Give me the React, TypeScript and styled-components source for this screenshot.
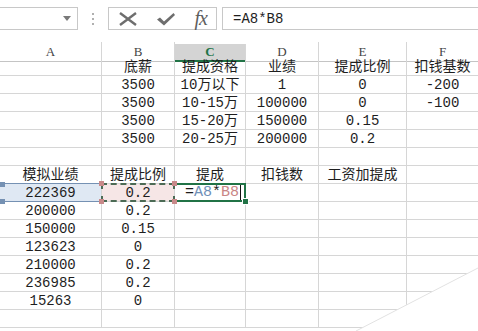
import React from 'react';
import styled, {createGlobalStyle, css} from 'styled-components';

const GREEN = '#217346';
const GRID = '#d6d6d6';
const COLS = '102px 73px 71px 73px 88px 72px';

const GlobalStyle = createGlobalStyle`
	body {
		margin: 0;
		background: #fff;
		overflow: hidden;
		font-family: "Liberation Mono", "Noto Sans CJK SC", monospace;
	}
`;

const top: string[][] = [
	['', '底薪', '提成资格', '业绩', '提成比例', '扣钱基数'],
	['', '3500', '10万以下', '1', '0', '-200'],
	['', '3500', '10-15万', '100000', '0', '-100'],
	['', '3500', '15-20万', '150000', '0.15', ''],
	['', '3500', '20-25万', '200000', '0.2', ''],
	['', '', '', '', '', ''],
	['模拟业绩', '提成比例', '提成', '扣钱数', '工资加提成', ''],
];

const bottom: string[][] = [
	['200000', '0.2'],
	['150000', '0.15'],
	['123623', '0'],
	['210000', '0.2'],
	['236985', '0.2'],
	['15263', '0'],
	['', ''],
];

const letters = ['A', 'B', 'C', 'D', 'E', 'F'];

function App() {
	return (
		<Page>
			<GlobalStyle />
			<FormulaBar>
				<NameBox>
					<svg width="8" height="5" viewBox="0 0 8 5">
						<path d="M0 0 H8 L4 5 Z" fill="#7a7a7a" />
					</svg>
				</NameBox>
				<Grip>
					<i />
					<i />
					<i />
				</Grip>
				<ButtonBox>
					<svg width="20" height="14" viewBox="0 0 20 14">
						<path d="M2 1 L18 13 M18 1 L2 13" stroke="#6e6e6e" strokeWidth="2.4" fill="none" />
					</svg>
					<svg width="20" height="14" viewBox="0 0 20 14">
						<path d="M1 7.5 L4 5.5 L8 9.5 L17.5 1 L19 3 L8 13.5 Z" fill="#6e6e6e" />
					</svg>
					<Fx>fx</Fx>
				</ButtonBox>
				<FormulaInput>=A8*B8</FormulaInput>
			</FormulaBar>

			<HeaderRow>
				{letters.map((l) => (
					<HeaderCell key={l} $active={l === 'C'}>
						{l}
					</HeaderCell>
				))}
			</HeaderRow>

			<Sheet>
				{top.map((r, i) =>
					r.map((t, j) => <Cell key={`t${i}-${j}`}>{t}</Cell>),
				)}

				<Cell $kind="refA">
					222369
					<RefLine />
					<Handle $color="#7591b3" style={{left: 0, top: -2}} />
					<Handle $color="#7591b3" style={{left: 0, bottom: -3}} />
				</Cell>
				<Cell $kind="refB">
					0.2
					<Dashed />
					<Handle $color="#c98a8a" style={{left: -3, top: -3}} />
					<Handle $color="#c98a8a" style={{right: -3, top: -3}} />
					<Handle $color="#c98a8a" style={{left: -3, bottom: -3}} />
					<Handle $color="#c98a8a" style={{right: -3, bottom: -3}} />
				</Cell>
				<Cell $kind="active">
					<Edit>
						=<Ref $color="#6f8fb8">A8</Ref>*<Ref $color="#c98585">B8</Ref>
						<Caret />
					</Edit>
					<ActiveBorder />
					<FillHandle />
				</Cell>
				<Cell />
				<Cell />
				<Cell />

				{bottom.map((r, i) =>
					[...r, '', '', '', ''].map((t, j) => (
						<Cell key={`b${i}-${j}`}>{t}</Cell>
					)),
				)}
			</Sheet>

			<Fold viewBox="0 0 478 331" width="478" height="331">
				<polygon points="478,268 356,331 478,331" fill="#fff" />
				<line x1="478" y1="268" x2="356" y2="331" stroke="#e2e2e2" strokeWidth="1" />
			</Fold>
		</Page>
	);
}

export default App;

const Page = styled.div`
	position: relative;
	width: 478px;
	height: 331px;
	overflow: hidden;
	background: #fff;
`;

const FormulaBar = styled.div`
	display: flex;
	height: 23px;
	margin-top: 7px;
`;

const NameBox = styled.div`
	box-sizing: border-box;
	width: 78px;
	border: 1px solid #c8c8c8;
	border-left: none;
	display: flex;
	align-items: center;
	justify-content: flex-end;
	padding-right: 6px;
`;

const Grip = styled.div`
	width: 30px;
	display: flex;
	flex-direction: column;
	align-items: center;
	justify-content: center;
	gap: 3px;

	i {
		display: block;
		width: 2px;
		height: 2px;
		background: #b0b0b0;
	}
`;

const ButtonBox = styled.div`
	box-sizing: border-box;
	width: 109px;
	border: 1px solid #c8c8c8;
	display: flex;
	align-items: center;
	justify-content: space-between;
	padding: 0 9px 0 9px;
`;

const Fx = styled.span`
	font-family: "Liberation Serif", serif;
	font-style: italic;
	font-size: 20px;
	line-height: 1;
	color: #5e5e5e;
	letter-spacing: -1px;
	margin-top: -2px;
`;

const FormulaInput = styled.div`
	box-sizing: border-box;
	flex: 1;
	margin-left: 5px;
	border: 1px solid #c8c8c8;
	border-right: none;
	display: flex;
	align-items: center;
	padding-left: 10px;
	font-size: 14px;
	color: #1e1e1e;
`;

const HeaderRow = styled.div`
	display: grid;
	grid-template-columns: ${COLS};
	margin-top: 12px;
	height: 16px;
`;

const HeaderCell = styled.div<{$active?: boolean}>`
	box-sizing: border-box;
	border-right: 1px solid ${GRID};
	border-bottom: 1px solid #c4c4c4;
	display: flex;
	align-items: center;
	justify-content: center;
	font-family: "Liberation Serif", serif;
	font-size: 13px;
	color: #444;
	${(p) =>
		p.$active &&
		css`
			background: #d4d4d4;
			color: ${GREEN};
			font-weight: bold;
			border-bottom: 2px solid ${GREEN};
			margin-top: 2px;
		`}
`;

const Sheet = styled.div`
	display: grid;
	grid-template-columns: ${COLS};
	grid-auto-rows: 18px;
`;

const Cell = styled.div<{$kind?: 'refA' | 'refB' | 'active'}>`
	position: relative;
	box-sizing: border-box;
	border-right: 1px solid ${GRID};
	border-bottom: 1px solid ${GRID};
	display: flex;
	align-items: center;
	justify-content: center;
	font-size: 14px;
	line-height: 1;
	color: #1e1e1e;
	white-space: nowrap;
	${(p) => p.$kind === 'refA' && css`background: #dfe8f3;`}
	${(p) => p.$kind === 'refB' && css`background: #f6e6e6;`}
	${(p) => p.$kind === 'active' && css`justify-content: flex-start;`}
`;

const RefLine = styled.span`
	position: absolute;
	left: 0;
	right: -1px;
	top: -1px;
	bottom: -1px;
	border-top: 1px solid #7591b3;
	border-bottom: 1px solid #7591b3;
	pointer-events: none;
`;

const Dashed = styled.span`
	position: absolute;
	left: -1px;
	right: -1px;
	top: -1px;
	bottom: -1px;
	border: 2px dashed #4c6b55;
	pointer-events: none;
`;

const Handle = styled.span<{$color: string}>`
	position: absolute;
	width: 5px;
	height: 5px;
	background: ${(p) => p.$color};
	z-index: 2;
`;

const Edit = styled.span`
	padding-left: 10px;
	font-size: 15px;
	display: flex;
	align-items: center;
`;

const Ref = styled.span<{$color: string}>`
	color: ${(p) => p.$color};
`;

const Caret = styled.span`
	display: inline-block;
	width: 1px;
	height: 15px;
	background: #111;
	margin-left: 1px;
`;

const ActiveBorder = styled.span`
	position: absolute;
	left: 0;
	right: -1px;
	top: -1px;
	bottom: -1px;
	border: 2px solid ${GREEN};
	border-left: none;
	pointer-events: none;
`;

const FillHandle = styled.span`
	position: absolute;
	right: -4px;
	bottom: -4px;
	width: 5px;
	height: 5px;
	background: ${GREEN};
	border: 1px solid #fff;
	z-index: 3;
`;

const Fold = styled.svg`
	position: absolute;
	left: 0;
	top: 0;
	pointer-events: none;
`;
